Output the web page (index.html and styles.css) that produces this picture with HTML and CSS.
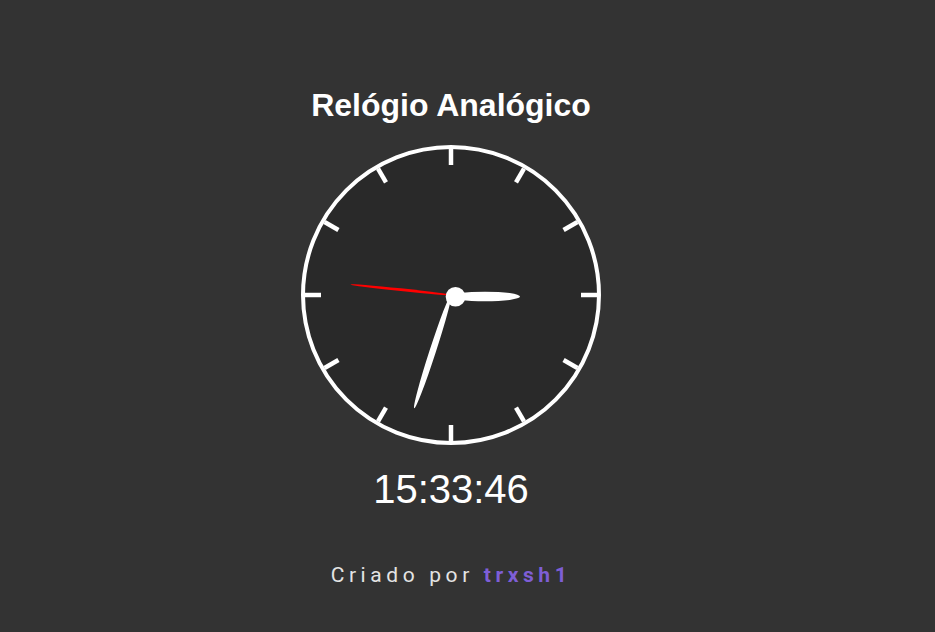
FILE: index.html
```html
<!DOCTYPE html>
<html lang="pt-BR">
<head>
<meta charset="utf-8">
<title>Relógio Analógico</title>
<link rel="stylesheet" href="styles.css">
</head>
<body>
<main class="page">
  <h1 class="title">Relógio Analógico</h1>
  <div class="clock">
    <svg class="clock-svg" width="300" height="300" viewBox="0 0 300 300">
      <circle class="face" cx="150" cy="150" r="148"/>
      <g class="ticks">
        <line x1="150" y1="4" x2="150" y2="20" transform="rotate(0 150 150)"/>
        <line x1="150" y1="4" x2="150" y2="20" transform="rotate(30 150 150)"/>
        <line x1="150" y1="4" x2="150" y2="20" transform="rotate(60 150 150)"/>
        <line x1="150" y1="4" x2="150" y2="20" transform="rotate(90 150 150)"/>
        <line x1="150" y1="4" x2="150" y2="20" transform="rotate(120 150 150)"/>
        <line x1="150" y1="4" x2="150" y2="20" transform="rotate(150 150 150)"/>
        <line x1="150" y1="4" x2="150" y2="20" transform="rotate(180 150 150)"/>
        <line x1="150" y1="4" x2="150" y2="20" transform="rotate(210 150 150)"/>
        <line x1="150" y1="4" x2="150" y2="20" transform="rotate(240 150 150)"/>
        <line x1="150" y1="4" x2="150" y2="20" transform="rotate(270 150 150)"/>
        <line x1="150" y1="4" x2="150" y2="20" transform="rotate(300 150 150)"/>
        <line x1="150" y1="4" x2="150" y2="20" transform="rotate(330 150 150)"/>
      </g>
      <ellipse class="hand-hour" cx="184" cy="151.5" rx="35" ry="4.8"/>
      <ellipse class="hand-minute" cx="150" cy="90.5" rx="3.2" ry="59.5" transform="rotate(198 150 150)"/>
      <ellipse class="hand-second" cx="150" cy="99.5" rx="1.4" ry="50.5" transform="rotate(276 150 150)"/>
      <circle class="pin" cx="154.5" cy="151.7" r="9.8"/>
    </svg>
  </div>
  <div class="time">15:33:46</div>
  <p class="credit">Criado por <span class="author">trxsh1</span></p>
</main>
</body>
</html>
```

FILE: styles.css
```css
html, body {
  margin: 0;
  padding: 0;
  background: #333333;
}

body {
  font-family: "Liberation Sans", Arial, sans-serif;
  color: #ffffff;
}

.page {
  width: 902px;
  display: flex;
  flex-direction: column;
  align-items: center;
  padding-top: 87px;
}

.title {
  margin: 0;
  font-size: 32px;
  font-weight: 700;
  line-height: 37px;
}

.clock {
  width: 300px;
  height: 300px;
  margin-top: 21px;
}

.clock-svg {
  display: block;
}

.face {
  fill: #292929;
  stroke: #ffffff;
  stroke-width: 4;
}

.ticks line {
  stroke: #ffffff;
  stroke-width: 4.5;
}

.hand-hour,
.hand-minute,
.pin {
  fill: #ffffff;
}

.hand-second {
  fill: #ff0000;
}

.time {
  margin-top: 21px;
  font-size: 40px;
  line-height: 46px;
}

.credit {
  margin: 51px 0 0;
  font-family: Roboto, "Liberation Sans", sans-serif;
  font-size: 21px;
  line-height: 25px;
  letter-spacing: 4.6px;
  color: #e4e4e4;
}

.author {
  font-weight: 700;
  color: #7e5ed6;
}
```
